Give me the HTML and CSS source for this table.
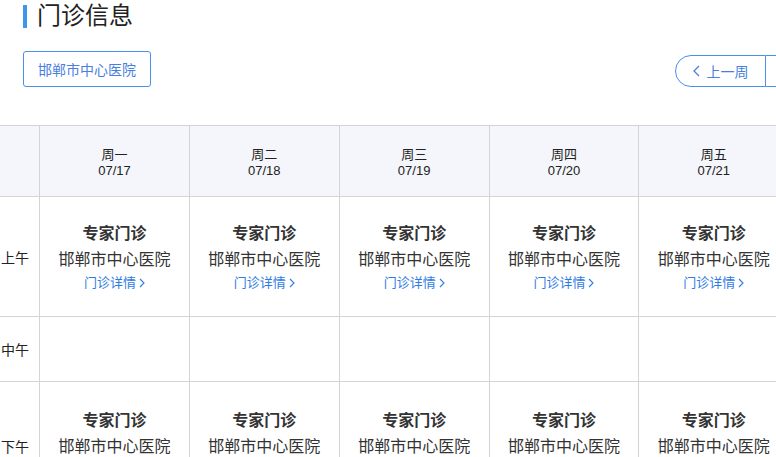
FILE: index.html
```html
<!DOCTYPE html>
<html lang="zh-CN">
<head>
<meta charset="utf-8">
<title>门诊信息</title>
<link rel="stylesheet" href="styles.css">
</head>
<body>
<div class="page">
  <div class="head">
    <h1 class="title"><span class="bar"></span>门诊信息</h1>
    <div class="toolbar">
      <button class="hosp-btn">邯郸市中心医院</button>
      <div class="week-nav">
        <button class="nav-btn prev"><svg class="chev" width="7" height="12" viewBox="0 0 7 12"><path d="M6 1 1 6l5 5" fill="none" stroke="currentColor" stroke-width="1.3"/></svg>上一周</button>
        <button class="nav-btn cur">本周</button>
        <button class="nav-btn next">下一周<svg class="chev" width="7" height="12" viewBox="0 0 7 12"><path d="m1 1 5 5-5 5" fill="none" stroke="currentColor" stroke-width="1.3"/></svg></button>
      </div>
    </div>
  </div>
  <table class="sched">
    <colgroup>
      <col class="c-label"><col class="c-day"><col class="c-day"><col class="c-day"><col class="c-day"><col class="c-day"><col class="c-day"><col class="c-day">
    </colgroup>
    <thead>
      <tr>
        <th></th>
        <th><div>周一</div><div>07/17</div></th>
        <th><div>周二</div><div>07/18</div></th>
        <th><div>周三</div><div>07/19</div></th>
        <th><div>周四</div><div>07/20</div></th>
        <th><div>周五</div><div>07/21</div></th>
        <th><div>周六</div><div>07/22</div></th>
        <th><div>周日</div><div>07/23</div></th>
      </tr>
    </thead>
    <tbody>
      <tr class="r-am">
        <td class="lbl">上午</td>
        <td><div class="slot"><div class="kind">专家门诊</div><div class="hosp">邯郸市中心医院</div><a class="more">门诊详情<svg width="6" height="10" viewBox="0 0 6 10"><path d="m1 1 4 4-4 4" fill="none" stroke="currentColor" stroke-width="1.1"/></svg></a></div></td>
        <td><div class="slot"><div class="kind">专家门诊</div><div class="hosp">邯郸市中心医院</div><a class="more">门诊详情<svg width="6" height="10" viewBox="0 0 6 10"><path d="m1 1 4 4-4 4" fill="none" stroke="currentColor" stroke-width="1.1"/></svg></a></div></td>
        <td><div class="slot"><div class="kind">专家门诊</div><div class="hosp">邯郸市中心医院</div><a class="more">门诊详情<svg width="6" height="10" viewBox="0 0 6 10"><path d="m1 1 4 4-4 4" fill="none" stroke="currentColor" stroke-width="1.1"/></svg></a></div></td>
        <td><div class="slot"><div class="kind">专家门诊</div><div class="hosp">邯郸市中心医院</div><a class="more">门诊详情<svg width="6" height="10" viewBox="0 0 6 10"><path d="m1 1 4 4-4 4" fill="none" stroke="currentColor" stroke-width="1.1"/></svg></a></div></td>
        <td><div class="slot"><div class="kind">专家门诊</div><div class="hosp">邯郸市中心医院</div><a class="more">门诊详情<svg width="6" height="10" viewBox="0 0 6 10"><path d="m1 1 4 4-4 4" fill="none" stroke="currentColor" stroke-width="1.1"/></svg></a></div></td>
        <td></td>
        <td></td>
      </tr>
      <tr class="r-noon">
        <td class="lbl">中午</td>
        <td></td><td></td><td></td><td></td><td></td><td></td><td></td>
      </tr>
      <tr class="r-pm">
        <td class="lbl">下午</td>
        <td><div class="slot"><div class="kind">专家门诊</div><div class="hosp">邯郸市中心医院</div><a class="more">门诊详情<svg width="6" height="10" viewBox="0 0 6 10"><path d="m1 1 4 4-4 4" fill="none" stroke="currentColor" stroke-width="1.1"/></svg></a></div></td>
        <td><div class="slot"><div class="kind">专家门诊</div><div class="hosp">邯郸市中心医院</div><a class="more">门诊详情<svg width="6" height="10" viewBox="0 0 6 10"><path d="m1 1 4 4-4 4" fill="none" stroke="currentColor" stroke-width="1.1"/></svg></a></div></td>
        <td><div class="slot"><div class="kind">专家门诊</div><div class="hosp">邯郸市中心医院</div><a class="more">门诊详情<svg width="6" height="10" viewBox="0 0 6 10"><path d="m1 1 4 4-4 4" fill="none" stroke="currentColor" stroke-width="1.1"/></svg></a></div></td>
        <td><div class="slot"><div class="kind">专家门诊</div><div class="hosp">邯郸市中心医院</div><a class="more">门诊详情<svg width="6" height="10" viewBox="0 0 6 10"><path d="m1 1 4 4-4 4" fill="none" stroke="currentColor" stroke-width="1.1"/></svg></a></div></td>
        <td><div class="slot"><div class="kind">专家门诊</div><div class="hosp">邯郸市中心医院</div><a class="more">门诊详情<svg width="6" height="10" viewBox="0 0 6 10"><path d="m1 1 4 4-4 4" fill="none" stroke="currentColor" stroke-width="1.1"/></svg></a></div></td>
        <td></td>
        <td></td>
      </tr>
    </tbody>
  </table>
</div>
</body>
</html>
```

FILE: styles.css
```css
html, body {
  margin: 0;
  padding: 0;
  background: #fff;
  overflow: hidden;
}
body {
  font-family: "Liberation Sans", "Noto Sans CJK SC", sans-serif;
  color: #333;
  width: 776px;
  height: 457px;
}
.page {
  width: 1100px;
}
.head {
  padding-left: 23px;
}
.title {
  margin: 0;
  padding-top: 2px;
  display: flex;
  align-items: center;
  font-size: 24px;
  font-weight: normal;
  line-height: 28px;
  color: #222;
}
.bar {
  width: 4px;
  height: 23px;
  background: #3f94ec;
  margin-right: 10px;
}
.toolbar {
  display: flex;
  align-items: center;
  width: 903px;
  margin-top: 21px;
  height: 36px;
}
.hosp-btn {
  height: 36px;
  width: 128px;
  padding: 0;
  border: 1px solid #4a8ef0;
  border-radius: 3px;
  background: #fff;
  color: #4a7fe0;
  font-family: inherit;
  font-size: 14px;
}
.week-nav {
  display: flex;
  margin-left: auto;
  margin-top: 4px;
}
.nav-btn {
  height: 32px;
  width: 90px;
  padding: 0;
  border: 1px solid #4a8ef0;
  background: #fff;
  color: #4a7fe0;
  font-family: inherit;
  font-size: 14px;
  display: flex;
  align-items: center;
  justify-content: center;
  gap: 7px;
}
.nav-btn.prev {
  width: 91px;
  border-radius: 16px 0 0 16px;
}
.nav-btn.cur {
  width: 70px;
  border-left: none;
}
.nav-btn.next {
  border-left: none;
  border-radius: 0 16px 16px 0;
}
.chev {
  display: block;
}
.sched {
  margin-top: 38px;
  margin-left: -1px;
  border-collapse: collapse;
  table-layout: fixed;
  width: 1090px;
}
.c-label { width: 40px; }
.c-day { width: 149.7px; }
.sched th, .sched td {
  border: 1px solid #d3d3d8;
  padding: 0;
  text-align: center;
  vertical-align: middle;
}
.sched th {
  background: #f4f6fb;
  height: 71px;
  font-size: 13px;
  font-weight: normal;
  line-height: 16px;
  color: #222;
  padding-top: 4px;
  box-sizing: border-box;
}
.r-am td, .r-pm td { height: 119px; }
.r-noon td { height: 64px; }
.sched td.lbl {
  text-align: left;
  padding-left: 1px;
  font-size: 14px;
  color: #222;
}
.r-pm td.lbl { padding-top: 4px; }
.slot {
  display: flex;
  flex-direction: column;
  align-items: center;
}
.kind {
  font-size: 16px;
  font-weight: bold;
  line-height: 26px;
  color: #333;
}
.hosp {
  font-size: 16px;
  line-height: 26px;
  color: #333;
}
.more {
  font-size: 13px;
  line-height: 20px;
  color: #2f7be6;
  display: flex;
  align-items: center;
  gap: 3px;
}
.more svg { display: block; }
```
